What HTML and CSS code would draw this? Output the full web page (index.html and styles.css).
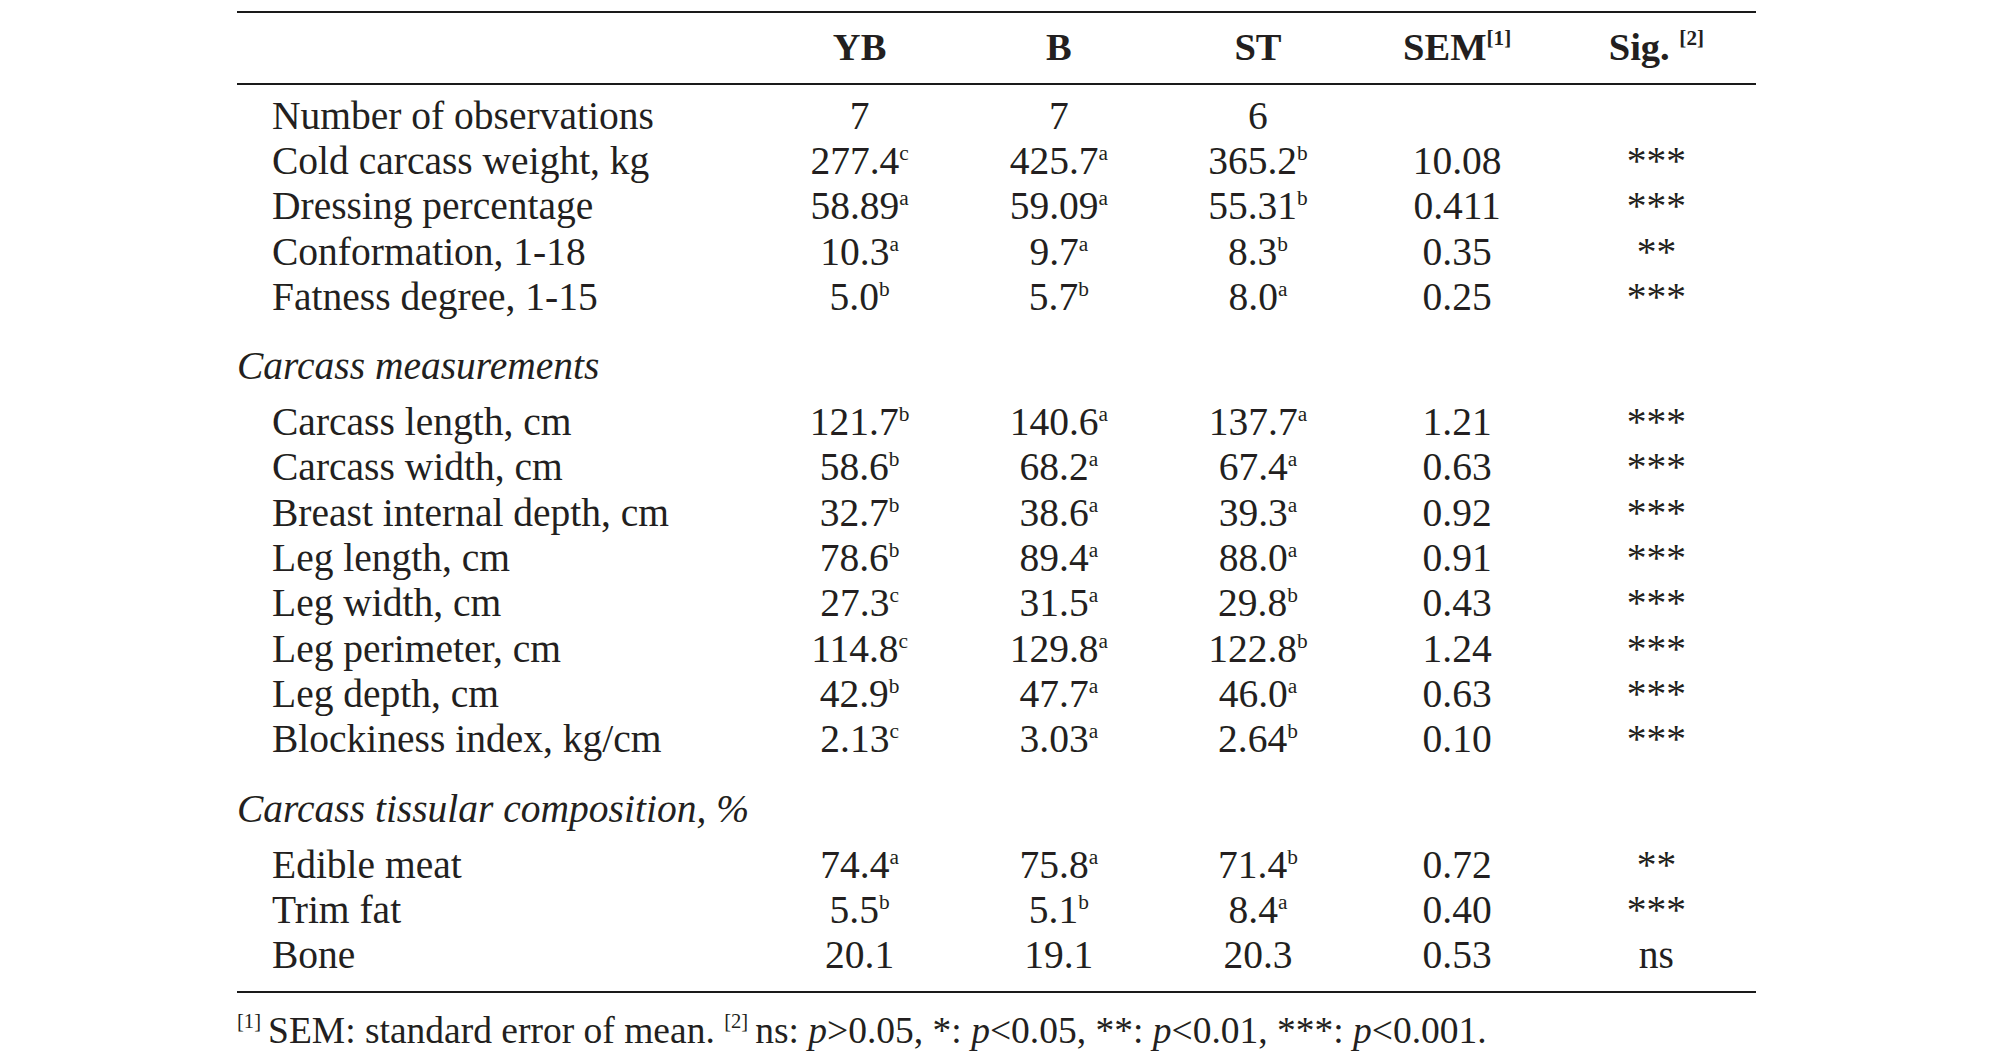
FILE: index.html
```html
<!DOCTYPE html>
<html lang="en">
<head>
<meta charset="utf-8">
<title>Carcass traits</title>
<link rel="stylesheet" href="styles.css">
</head>
<body>
<div class="page">
  <table class="data">
    <colgroup>
      <col class="c-label">
      <col class="c-val"><col class="c-val"><col class="c-val"><col class="c-val"><col class="c-val">
    </colgroup>
    <thead>
      <tr>
        <th></th>
        <th>YB</th>
        <th>B</th>
        <th>ST</th>
        <th>SEM<sup class="ref">[1]</sup></th>
        <th>Sig. <sup class="ref">[2]</sup></th>
      </tr>
    </thead>
    <tbody>
      <tr class="first">
        <td class="label">Number of observations</td><td>7</td><td>7</td><td>6</td><td></td><td></td>
      </tr>
      <tr>
        <td class="label">Cold carcass weight, kg</td><td>277.4<sup>c</sup></td><td>425.7<sup>a</sup></td><td>365.2<sup>b</sup></td><td>10.08</td><td>***</td>
      </tr>
      <tr>
        <td class="label">Dressing percentage</td><td>58.89<sup>a</sup></td><td>59.09<sup>a</sup></td><td>55.31<sup>b</sup></td><td>0.411</td><td>***</td>
      </tr>
      <tr>
        <td class="label">Conformation, 1-18</td><td>10.3<sup>a</sup></td><td>9.7<sup>a</sup></td><td>8.3<sup>b</sup></td><td>0.35</td><td>**</td>
      </tr>
      <tr>
        <td class="label">Fatness degree, 1-15</td><td>5.0<sup>b</sup></td><td>5.7<sup>b</sup></td><td>8.0<sup>a</sup></td><td>0.25</td><td>***</td>
      </tr>
      <tr class="section">
        <td class="heading" colspan="6">Carcass measurements</td>
      </tr>
      <tr>
        <td class="label">Carcass length, cm</td><td>121.7<sup>b</sup></td><td>140.6<sup>a</sup></td><td>137.7<sup>a</sup></td><td>1.21</td><td>***</td>
      </tr>
      <tr>
        <td class="label">Carcass width, cm</td><td>58.6<sup>b</sup></td><td>68.2<sup>a</sup></td><td>67.4<sup>a</sup></td><td>0.63</td><td>***</td>
      </tr>
      <tr>
        <td class="label">Breast internal depth, cm</td><td>32.7<sup>b</sup></td><td>38.6<sup>a</sup></td><td>39.3<sup>a</sup></td><td>0.92</td><td>***</td>
      </tr>
      <tr>
        <td class="label">Leg length, cm</td><td>78.6<sup>b</sup></td><td>89.4<sup>a</sup></td><td>88.0<sup>a</sup></td><td>0.91</td><td>***</td>
      </tr>
      <tr>
        <td class="label">Leg width, cm</td><td>27.3<sup>c</sup></td><td>31.5<sup>a</sup></td><td>29.8<sup>b</sup></td><td>0.43</td><td>***</td>
      </tr>
      <tr>
        <td class="label">Leg perimeter, cm</td><td>114.8<sup>c</sup></td><td>129.8<sup>a</sup></td><td>122.8<sup>b</sup></td><td>1.24</td><td>***</td>
      </tr>
      <tr>
        <td class="label">Leg depth, cm</td><td>42.9<sup>b</sup></td><td>47.7<sup>a</sup></td><td>46.0<sup>a</sup></td><td>0.63</td><td>***</td>
      </tr>
      <tr>
        <td class="label">Blockiness index, kg/cm</td><td>2.13<sup>c</sup></td><td>3.03<sup>a</sup></td><td>2.64<sup>b</sup></td><td>0.10</td><td>***</td>
      </tr>
      <tr class="section">
        <td class="heading" colspan="6">Carcass tissular composition, %</td>
      </tr>
      <tr>
        <td class="label">Edible meat</td><td>74.4<sup>a</sup></td><td>75.8<sup>a</sup></td><td>71.4<sup>b</sup></td><td>0.72</td><td>**</td>
      </tr>
      <tr>
        <td class="label">Trim fat</td><td>5.5<sup>b</sup></td><td>5.1<sup>b</sup></td><td>8.4<sup>a</sup></td><td>0.40</td><td>***</td>
      </tr>
      <tr class="last">
        <td class="label">Bone</td><td>20.1</td><td>19.1</td><td>20.3</td><td>0.53</td><td>ns</td>
      </tr>
    </tbody>
  </table>
  <p class="note"><sup class="ref">[1]</sup>SEM: standard error of mean. <sup class="ref">[2]</sup>ns: <i>p</i>&gt;0.05, *: <i>p</i>&lt;0.05, **: <i>p</i>&lt;0.01, ***: <i>p</i>&lt;0.001.</p>
</div>
</body>
</html>
```

FILE: styles.css
```css
html, body {
  margin: 0;
  padding: 0;
  background: #ffffff;
}

body {
  font-family: "Liberation Serif", "Times New Roman", serif;
  color: #231f20;
}

.page {
  padding: 11px 0 0 237px;
  width: 1519px;
}

.data {
  width: 1519px;
  table-layout: fixed;
  border-collapse: separate;
  border-spacing: 0;
  font-size: 39.5px;
  line-height: 45.3px;
}

.c-label { width: 523px; }
.c-val { width: 199.2px; }

.data th,
.data td {
  padding: 0;
  text-align: center;
  white-space: nowrap;
  font-weight: normal;
}

.data thead th {
  font-weight: bold;
  font-size: 38.5px;
  border-top: 2px solid #1a1a1a;
  border-bottom: 2px solid #1a1a1a;
  padding-top: 11.5px;
  padding-bottom: 13.2px;
}

.data td.label {
  text-align: left;
  padding-left: 35px;
}

.data td.heading {
  text-align: left;
  font-style: italic;
  padding-left: 0;
}

.data tr.first td {
  padding-top: 8.7px;
}

.data tr.section td {
  padding-top: 24px;
  padding-bottom: 10.7px;
}

.data tr.last td {
  padding-bottom: 13px;
  border-bottom: 2px solid #1a1a1a;
}

sup {
  font-size: 0.54em;
  line-height: 0;
  vertical-align: 0.68em;
}

sup.ref {
  font-size: 0.55em;
  vertical-align: 0.72em;
}

.note {
  margin: 14.9px 0 0 0;
  font-size: 37.5px;
  line-height: 45.3px;
  white-space: nowrap;
}

.note sup.ref {
  margin-right: 7px;
}

.note i {
  font-style: italic;
}
```
